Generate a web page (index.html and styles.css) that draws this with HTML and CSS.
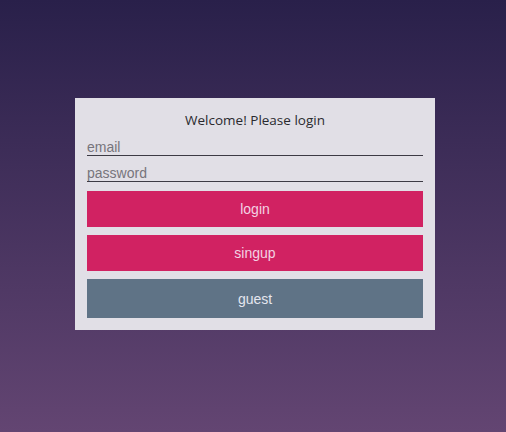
FILE: index.html
```html
<!DOCTYPE html>
<html>
<head>
<meta charset="utf-8">
<link rel="stylesheet" href="styles.css">
</head>
<body>
<main class="page">
  <form class="card">
    <p class="title">Welcome! Please login</p>
    <input class="field" type="text" placeholder="email">
    <input class="field" type="password" placeholder="password">
    <button class="btn btn-primary" type="button">login</button>
    <button class="btn btn-primary" type="button">singup</button>
    <button class="btn btn-guest" type="button">guest</button>
  </form>
</main>
</body>
</html>
```
FILE: styles.css
```css
html, body {
  margin: 0;
  height: 100%;
}
body {
  background: linear-gradient(to bottom, #29204a 0%, #634572 100%);
  font-family: "Liberation Sans", Arial, sans-serif;
}
.page {
  height: 100%;
  box-sizing: border-box;
  display: grid;
  place-items: center;
  padding: 0 0 4px 4px;
}
.card {
  width: 360px;
  box-sizing: border-box;
  background: #e1dfe6;
  padding: 12px;
  display: flex;
  flex-direction: column;
}
.title {
  margin: 0 0 8px;
  text-align: center;
  font-family: "Open Sans", "Noto Sans", sans-serif;
  font-size: 13.5px;
  line-height: 20px;
  color: #2a2a2e;
}
.field {
  margin: 0 0 8px;
  padding: 0;
  height: 18px;
  box-sizing: border-box;
  border: none;
  border-bottom: 1px solid #3c3a44;
  background: transparent;
  font-family: "Liberation Sans", Arial, sans-serif;
  font-size: 14px;
  color: #333;
  outline: none;
}
.field + .field {
  margin-bottom: 9px;
}
.field::placeholder {
  color: #77757c;
}
.btn {
  border: none;
  margin: 0;
  font-family: "Liberation Sans", Arial, sans-serif;
  font-size: 14px;
  cursor: pointer;
}
.btn-primary {
  height: 36px;
  background: #d12262;
  color: #f3d2e2;
  margin-bottom: 8px;
}
.btn-guest {
  height: 39px;
  background: #5f7386;
  color: #e4e6ee;
}
```
